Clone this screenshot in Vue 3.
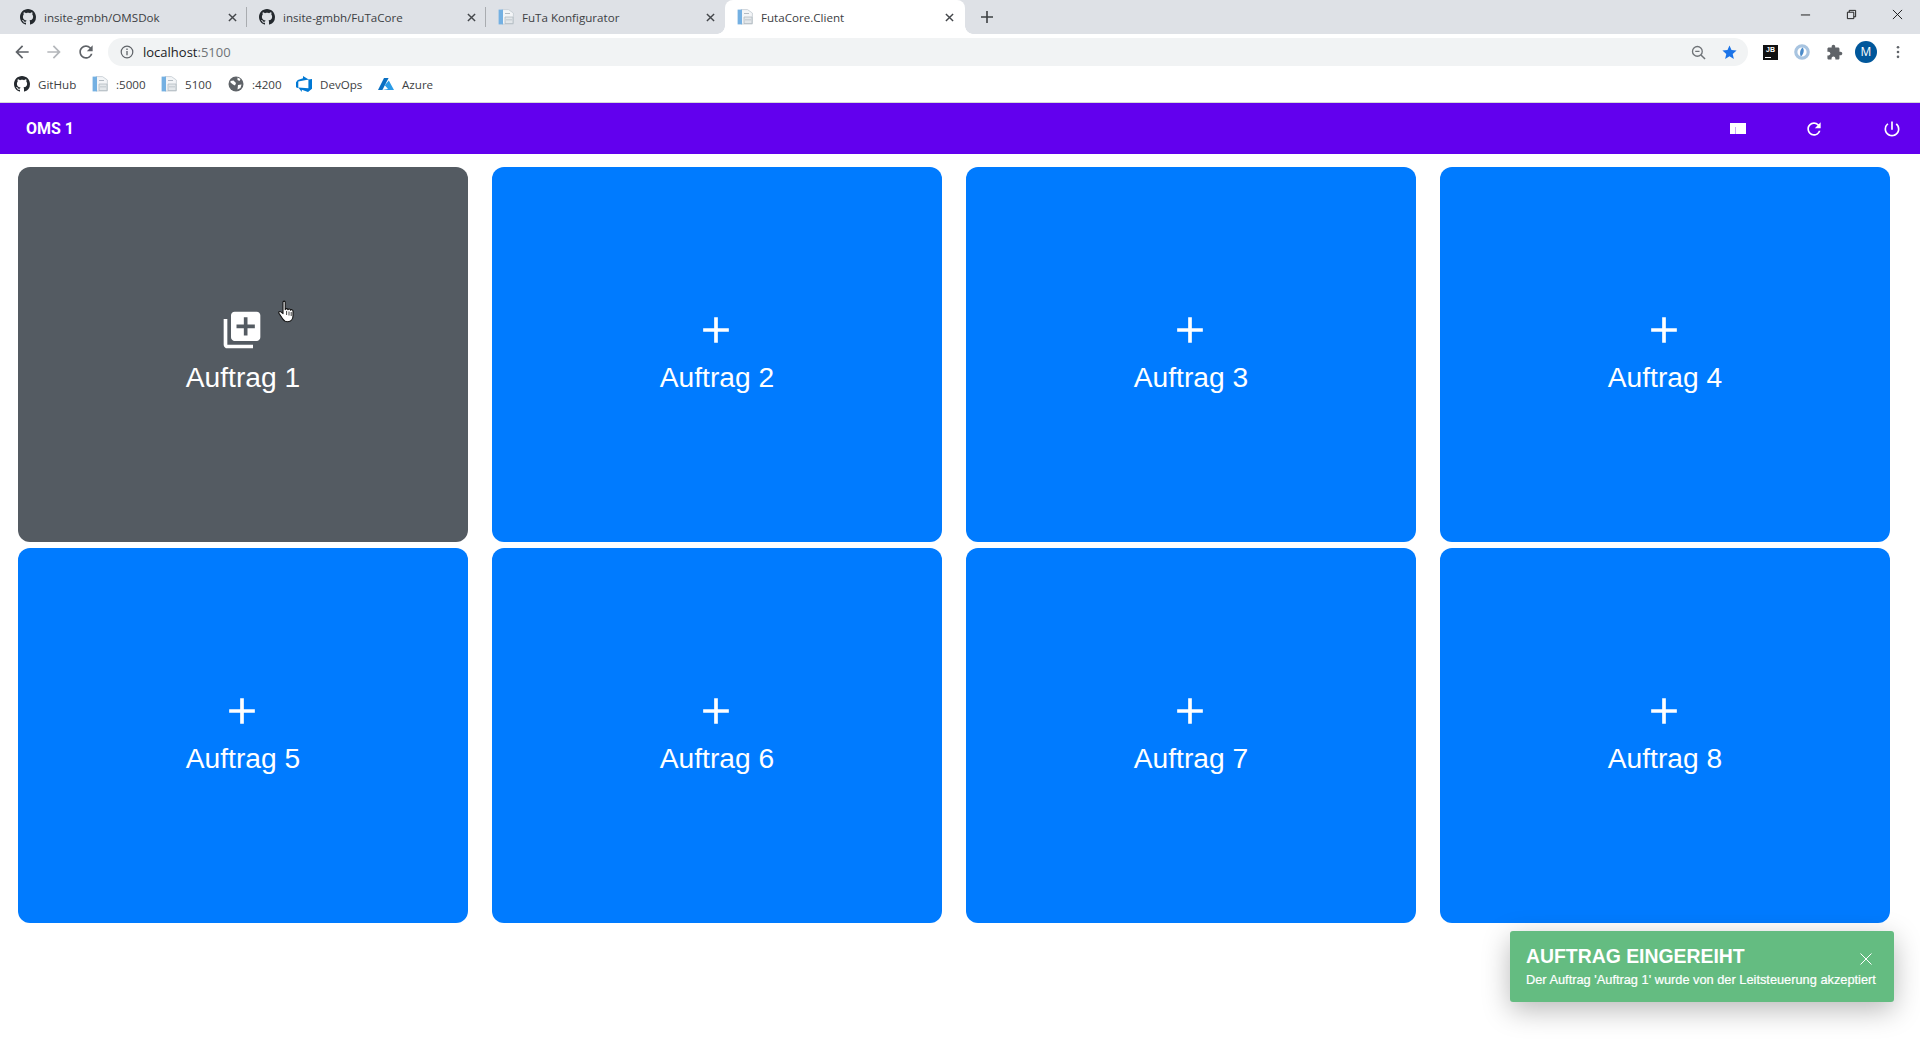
<script setup>
const tabs = [
  { title: 'insite-gmbh/OMSDok', icon: 'github' },
  { title: 'insite-gmbh/FuTaCore', icon: 'github' },
  { title: 'FuTa Konfigurator', icon: 'file' },
  { title: 'FutaCore.Client', icon: 'file', active: true }
]

const bookmarks = [
  { title: 'GitHub', icon: 'github', width: 78 },
  { title: ':5000', icon: 'file', width: 69 },
  { title: '5100', icon: 'file', width: 67 },
  { title: ':4200', icon: 'globe', width: 68 },
  { title: 'DevOps', icon: 'devops', width: 82 },
  { title: 'Azure', icon: 'azure', width: 60 }
]

const orders = [1, 2, 3, 4, 5, 6, 7, 8]
const github = 'M8 0C3.58 0 0 3.58 0 8c0 3.54 2.29 6.53 5.47 7.59.4.07.55-.17.55-.38 0-.19-.01-.82-.01-1.49-2.01.37-2.53-.49-2.69-.94-.09-.23-.48-.94-.82-1.13-.28-.15-.68-.52-.01-.53.63-.01 1.08.58 1.23.82.72 1.21 1.87.87 2.33.66.07-.52.28-.87.51-1.07-1.78-.2-3.64-.89-3.64-3.95 0-.87.31-1.59.82-2.15-.08-.2-.36-1.02.08-2.12 0 0 .67-.21 2.2.82.64-.18 1.32-.27 2-.27.68 0 1.36.09 2 .27 1.53-1.04 2.2-.82 2.2-.82.44 1.1.16 1.92.08 2.12.51.56.82 1.27.82 2.15 0 3.07-1.87 3.75-3.65 3.95.29.25.54.73.54 1.48 0 1.07-.01 1.93-.01 2.2 0 .21.15.46.55.38A8.013 8.013 0 0016 8c0-4.42-3.58-8-8-8z'
</script>

<template>
  <div class="page">
    <div class="tabstrip">
      <div
        v-for="tab in tabs"
        :key="tab.title"
        class="tab"
        :class="{ active: tab.active }"
      >
        <svg v-if="tab.icon === 'github'" class="fav" viewBox="0 0 16 16"><path fill="#24292e" :d="github" /></svg>
        <svg v-else class="fav" viewBox="0 0 16 16">
          <path fill="#f3f5f7" stroke="#c3cad1" stroke-width=".8" d="M4 .6h6.5L15.4 4v11H4z" />
          <path fill="#74b0e2" d="M.6 .6H5v14.8H.6z" />
          <path fill="#e3e7ea" stroke="#b3bbc2" stroke-width=".8" d="M7 8h8v6.5H7z" />
          <path fill="#b3bbc2" d="M7 4h5v1H7zM8 10.5h6v.8H8z" />
        </svg>
        <span class="tab-title">{{ tab.title }}</span>
        <svg class="tab-close" viewBox="0 0 10 10"><path d="M1 1l8 8M9 1l-8 8" stroke="#44474b" stroke-width="1.6" /></svg>
      </div>
      <svg class="new-tab" viewBox="0 0 12 12"><path d="M6 0v12M0 6h12" stroke="#3c4043" stroke-width="1.6" /></svg>
      <div class="win-controls">
        <div class="win-btn"><svg viewBox="0 0 12 12"><path d="M1 6.5h10" stroke="#111" /></svg></div>
        <div class="win-btn"><svg viewBox="0 0 12 12"><path d="M1.5 3.5h7v7h-7zM3.5 3.5v-2h7v7h-2" fill="none" stroke="#111" /></svg></div>
        <div class="win-btn"><svg viewBox="0 0 12 12"><path d="M1 1l10 10M11 1L1 11" stroke="#111" /></svg></div>
      </div>
    </div>

    <div class="toolbar">
      <svg class="nav-icon" viewBox="0 0 24 24"><path fill="#5f6368" d="M20 11H7.83l5.59-5.59L12 4l-8 8 8 8 1.41-1.41L7.83 13H20v-2z" /></svg>
      <svg class="nav-icon" viewBox="0 0 24 24"><path fill="#b4b7bb" d="M4 11h12.17l-5.59-5.59L12 4l8 8-8 8-1.41-1.41L16.17 13H4v-2z" /></svg>
      <svg class="nav-icon" viewBox="0 0 24 24"><path fill="#5f6368" d="M17.65 6.35A7.958 7.958 0 0012 4c-4.42 0-7.99 3.58-7.99 8s3.57 8 7.99 8c3.73 0 6.84-2.55 7.73-6h-2.08A5.99 5.99 0 0112 18c-3.31 0-6-2.69-6-6s2.69-6 6-6c1.66 0 3.14.69 4.22 1.78L13 11h7V4l-2.35 2.35z" /></svg>
      <div class="omnibox">
        <svg class="info" viewBox="0 0 14 14">
          <circle cx="7" cy="7" r="5.8" fill="none" stroke="#5f6368" stroke-width="1.2" />
          <path d="M7 6v4.2M7 3.6v1.3" stroke="#5f6368" stroke-width="1.3" />
        </svg>
        <span class="url">localhost<span class="url-port">:5100</span></span>
        <svg class="zoom-out" viewBox="0 0 16 16">
          <circle cx="6.8" cy="6.8" r="5.2" fill="none" stroke="#6f7377" stroke-width="1.4" />
          <path d="M10.6 10.6l4.4 4.4" stroke="#6f7377" stroke-width="1.6" />
          <path d="M4.5 6.8h4.6" stroke="#6f7377" stroke-width="1.3" />
        </svg>
        <svg class="star" viewBox="0 0 24 24"><path fill="#1a73e8" d="M12 17.27L18.18 21l-1.64-7.03L22 9.24l-7.19-.61L12 2 9.19 8.63 2 9.24l5.46 4.73L5.82 21z" /></svg>
      </div>
      <div class="extensions">
        <div class="ext-jb">JB<i></i></div>
        <svg class="ext-ring" viewBox="0 0 16 16">
          <circle cx="8" cy="8" r="6.2" fill="none" stroke="#a8c4e0" stroke-width="3.2" />
          <path d="M8.5 3.5c2.2 2 1.4 6.5-1.6 9-1.4-2.4-1.1-6.6 1.6-9z" fill="#4b8bc9" />
        </svg>
        <svg class="ext-puzzle" viewBox="0 0 24 24"><path fill="#5f6368" d="M20.5 11H19V7c0-1.1-.9-2-2-2h-4V3.5C13 2.12 11.88 1 10.5 1S8 2.12 8 3.5V5H4c-1.1 0-1.99.9-1.99 2v3.8H3.5c1.49 0 2.7 1.21 2.7 2.7s-1.21 2.7-2.7 2.7H2V20c0 1.1.9 2 2 2h3.8v-1.5c0-1.49 1.21-2.7 2.7-2.7 1.49 0 2.7 1.21 2.7 2.7V22H17c1.1 0 2-.9 2-2v-4h1.5c1.38 0 2.5-1.12 2.5-2.5S21.88 11 20.5 11z" /></svg>
        <div class="avatar">M</div>
        <svg class="kebab" viewBox="0 0 4 16"><circle cx="2" cy="2.5" r="1.5" fill="#5f6368" /><circle cx="2" cy="8" r="1.5" fill="#5f6368" /><circle cx="2" cy="13.5" r="1.5" fill="#5f6368" /></svg>
      </div>
    </div>

    <div class="bookmarks">
      <div
        v-for="mark in bookmarks"
        :key="mark.title"
        class="bookmark"
        :style="{ width: mark.width + 'px' }"
      >
        <svg v-if="mark.icon === 'github'" class="fav" viewBox="0 0 16 16"><path fill="#24292e" :d="github" /></svg>
        <svg v-else-if="mark.icon === 'file'" class="fav" viewBox="0 0 16 16">
          <path fill="#f3f5f7" stroke="#c3cad1" stroke-width=".8" d="M4 .6h6.5L15.4 4v11H4z" />
          <path fill="#74b0e2" d="M.6 .6H5v14.8H.6z" />
          <path fill="#e3e7ea" stroke="#b3bbc2" stroke-width=".8" d="M7 8h8v6.5H7z" />
          <path fill="#b3bbc2" d="M7 4h5v1H7zM8 10.5h6v.8H8z" />
        </svg>
        <svg v-else-if="mark.icon === 'globe'" class="fav" viewBox="0 0 16 16">
          <circle cx="8" cy="8" r="7.5" fill="#5f6368" />
          <path fill="#fff" d="M2.5 5l3-.5 2.5 2.5-1 2.5-2-1-2.5-2zM9.5 1.5l3 1.5-1 2-2-1zM10 9l3.5-.5-1 3.5-3 1.5z" />
        </svg>
        <svg v-else-if="mark.icon === 'devops'" class="fav" viewBox="0 0 16 16">
          <path fill="#0078d4" d="M16 3v9.7L12 16l-6.2-2.3v2.3L2.3 11.4l10.1.8V3.6zM12.7 3.5L7 0v2.3L1.8 3.9 0 6.2v5l2.3 1V5.4z" />
        </svg>
        <svg v-else class="fav" viewBox="0 0 16 16">
          <path fill="#0a6fc2" d="M6 2h4.6L4.4 14H0z" />
          <path fill="#2b9be6" d="M10.8 4.6L16 14H4.6l5.4-1-3.2-3.7z" />
        </svg>
        <span>{{ mark.title }}</span>
      </div>
    </div>

    <nav class="navbar">
      <span class="brand">OMS 1</span>
      <div class="nav-actions">
        <svg class="bar-icon screen" viewBox="0 0 16 11">
          <path fill="#fff" d="M0 0h16v11H0z" />
          <path fill="#c9a6f7" d="M5 4h1v7H5z" />
        </svg>
        <svg class="bar-icon" viewBox="0 0 24 24"><path fill="#fff" d="M17.65 6.35A7.958 7.958 0 0012 4c-4.42 0-7.99 3.58-7.99 8s3.57 8 7.99 8c3.73 0 6.84-2.55 7.73-6h-2.08A5.99 5.99 0 0112 18c-3.31 0-6-2.69-6-6s2.69-6 6-6c1.66 0 3.14.69 4.22 1.78L13 11h7V4l-2.35 2.35z" /></svg>
        <svg class="bar-icon" viewBox="0 0 24 24"><path fill="#fff" d="M13 3h-2v10h2V3zm4.83 2.17l-1.42 1.42A6.92 6.92 0 0119 12c0 3.87-3.13 7-7 7s-7-3.13-7-7c0-2.27 1.08-4.28 2.76-5.56L6.34 5.02A8.95 8.95 0 003 12c0 4.97 4.03 9 9 9s9-4.03 9-9c0-2.74-1.23-5.19-3.17-6.83z" /></svg>
      </div>
    </nav>

    <main class="grid">
      <button
        v-for="n in orders"
        :key="n"
        class="card"
        :class="{ hovered: n === 1 }"
      >
        <svg class="card-icon" viewBox="0 0 24 24">
          <path v-if="n === 1" fill="#fff" d="M4 6H2v14c0 1.1.9 2 2 2h14v-2H4V6zm16-4H8c-1.1 0-2 .9-2 2v12c0 1.1.9 2 2 2h12c1.1 0 2-.9 2-2V4c0-1.1-.9-2-2-2zm-1 9h-4v4h-2v-4H9V9h4V5h2v4h4v2z" />
          <path v-else fill="#fff" d="M19 13h-6v6h-2v-6H5v-2h6V5h2v6h6v2z" />
        </svg>
        <span class="card-label">Auftrag {{ n }}</span>
      </button>
    </main>

    <svg class="pointer" viewBox="0 0 18 24">
      <path fill="#fff" stroke="#111" stroke-width="1.1" stroke-linejoin="round" d="M5 2.2c0-1.4 2.2-1.4 2.2 0v7.4c.5-1.4 2.6-1.2 2.7.2.5-1.2 2.5-1 2.6.4.6-.9 2.5-.6 2.5.9v4.6c0 3.4-2 6-5.2 6-2.6 0-4-1-5.2-3L1 13.4c-.8-1.3.8-2.5 1.9-1.5L5 13.6z" />
      <path stroke="#111" stroke-width=".8" d="M8.6 11v4M11 11.5v4M13.2 12v4" />
    </svg>

    <div class="toast">
      <div class="toast-title">AUFTRAG EINGEREIHT</div>
      <div class="toast-text">Der Auftrag 'Auftrag 1' wurde von der Leitsteuerung akzeptiert</div>
      <svg class="toast-close" viewBox="0 0 12 12"><path d="M.5.5l11 11M11.5.5l-11 11" stroke="#fff" stroke-width="1" /></svg>
    </div>
  </div>
</template>

<style scoped>
.page {
  position: relative;
  width: 1920px;
  height: 1040px;
  overflow: hidden;
  background: #fff;
  font-family: "Open Sans", "Noto Sans", sans-serif;
}

.tabstrip {
  display: flex;
  align-items: flex-end;
  height: 34px;
  padding-left: 8px;
  background: #dee1e6;
}
.tab {
  position: relative;
  display: flex;
  align-items: center;
  flex: none;
  width: 239px;
  height: 34px;
  padding: 0 10px 0 12px;
  box-sizing: border-box;
  color: #3c4043;
  font-size: 11.6px;
}
/* short divider between inactive tabs */
.tab::after {
  content: "";
  position: absolute;
  right: 0;
  top: 7px;
  width: 1px;
  height: 20px;
  background: #a9acb0;
}
.tab:nth-child(3)::after { display: none; }
.tab.active {
  width: 240px;
  padding-right: 11px;
  border-radius: 8px 8px 0 0;
  background: #fff;
}
/* the flared feet of the active tab */
.tab.active::before,
.tab.active::after {
  content: "";
  position: absolute;
  top: auto;
  bottom: 0;
  display: block;
  width: 8px;
  height: 8px;
  background: radial-gradient(circle at 0 0, #dee1e6 7.5px, #fff 8px);
}
.tab.active::before {
  left: -8px;
  right: auto;
}
.tab.active::after {
  right: -8px;
  background: radial-gradient(circle at 100% 0, #dee1e6 7.5px, #fff 8px);
}
.fav {
  flex: none;
  width: 16px;
  height: 16px;
}
.tab-title {
  flex: 1;
  margin-left: 8px;
  white-space: nowrap;
}
.tab-close {
  flex: none;
  width: 9px;
  height: 9px;
}
.new-tab {
  flex: none;
  width: 12px;
  height: 12px;
  margin: 0 0 11px 16px;
}
.win-controls {
  display: flex;
  align-self: flex-start;
  margin-left: auto;
}
.win-btn {
  display: flex;
  align-items: center;
  justify-content: center;
  width: 46px;
  height: 29px;
}
.win-btn svg {
  width: 11px;
  height: 11px;
}

.toolbar {
  display: flex;
  align-items: center;
  height: 34px;
  padding: 2px 0 0 12px;
  box-sizing: border-box;
  background: #fff;
}
.nav-icon {
  flex: none;
  width: 20px;
  height: 20px;
  margin-right: 12px;
}
.omnibox {
  display: flex;
  flex: none;
  align-items: center;
  width: 1640px;
  height: 28px;
  padding: 0 10px 0 12px;
  box-sizing: border-box;
  border-radius: 14px;
  background: #f1f3f4;
  color: #202124;
  font-size: 13px;
}
.info {
  width: 14px;
  height: 14px;
}
.url {
  margin-left: 9px;
  flex: 1;
}
.url-port { color: #6f7377; }
.zoom-out {
  width: 15px;
  height: 15px;
  margin-right: 15px;
}
.star {
  width: 17px;
  height: 17px;
}
.extensions {
  display: flex;
  align-items: center;
  margin-left: 15px;
}
.ext-jb {
  position: relative;
  width: 15px;
  height: 15px;
  background: #111;
  color: #fff;
  font: bold 7px/10px "Liberation Sans", sans-serif;
  text-align: center;
}
.ext-jb i {
  position: absolute;
  left: 2px;
  bottom: 2px;
  width: 6px;
  height: 1px;
  background: #fff;
}
.ext-ring {
  width: 16px;
  height: 16px;
  margin-left: 16px;
}
.ext-puzzle {
  width: 17px;
  height: 17px;
  margin-left: 16px;
}
.avatar {
  width: 22px;
  height: 22px;
  margin-left: 12px;
  border-radius: 50%;
  background: #01579b;
  color: #fff;
  font: 12px/22px "Open Sans", sans-serif;
  text-align: center;
}
.kebab {
  width: 4px;
  height: 14px;
  margin-left: 19px;
}

.bookmarks {
  display: flex;
  align-items: center;
  height: 35px;
  padding: 0 0 2px 14px;
  box-sizing: border-box;
  border-bottom: 1px solid #d6d7d9;
  color: #3c4043;
  font-size: 11.6px;
}
.bookmark {
  display: flex;
  flex: none;
  align-items: center;
  gap: 8px;
  white-space: nowrap;
}

.navbar {
  display: flex;
  align-items: center;
  justify-content: space-between;
  height: 51px;
  padding: 0 18px 0 26px;
  background: #6200ee;
  color: #fff;
}
.brand {
  font: 700 16px "Roboto", sans-serif;
}
.nav-actions {
  display: flex;
  align-items: center;
  gap: 58px;
}
.bar-icon {
  width: 20px;
  height: 20px;
}
.bar-icon.screen {
  width: 16px;
  height: 11px;
}

.grid {
  display: grid;
  grid-template-columns: repeat(4, 450px);
  grid-template-rows: 375px 375px;
  gap: 6px 24px;
  padding: 13px 30px 0 18px;
}
.card {
  display: flex;
  flex-direction: column;
  align-items: center;
  justify-content: center;
  padding: 0 0 6px;
  border: none;
  border-radius: 12px;
  background: #007bff;
  color: #fff;
  font-family: "Liberation Sans", Arial, sans-serif;
}
.card.hovered { background: #545b62; }
.card-icon {
  width: 44px;
  height: 44px;
  margin-right: 2px;
}
.card-label {
  margin-top: 7px;
  font-size: 28.2px;
  line-height: 36px;
}

.pointer {
  position: absolute;
  left: 278px;
  top: 300px;
  width: 18px;
  height: 24px;
}

.toast {
  position: absolute;
  left: 1510px;
  top: 931px;
  width: 384px;
  height: 71px;
  padding: 14px 16px;
  box-sizing: border-box;
  border-radius: 3px;
  background: #64bc81;
  box-shadow: 0 8px 28px rgba(0, 0, 0, 0.28);
  color: #fff;
  font-family: "Liberation Sans", Arial, sans-serif;
}
.toast-title {
  font-size: 19.4px;
  font-weight: bold;
  line-height: 22px;
}
.toast-text {
  margin-top: 5px;
  font-size: 12.8px;
  line-height: 16px;
  white-space: nowrap;
  -webkit-text-stroke: 0.2px #fff;
}
.toast-close {
  position: absolute;
  right: 22px;
  top: 22px;
  width: 12px;
  height: 12px;
}
</style>
